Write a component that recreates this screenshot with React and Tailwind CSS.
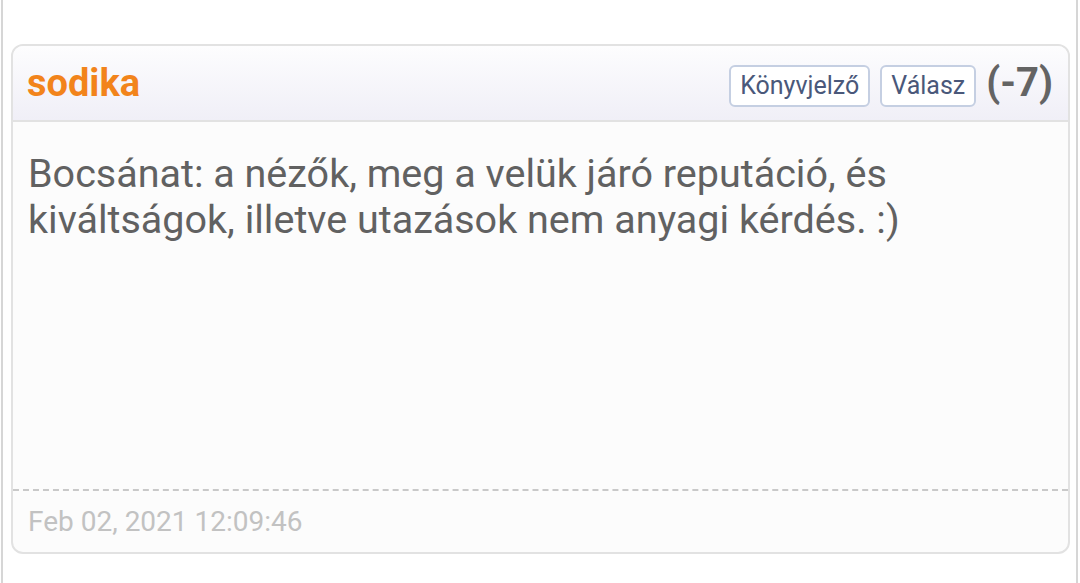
const App = () => {
  return (
    <div className="w-[1080px] h-[583px] bg-white font-['Roboto',sans-serif] overflow-hidden">
      <div className="ml-px w-[1077px] h-full border-x-2 border-[#d6d6d6] pl-2 pt-[44px]">
        <div className="w-[1059px] h-[510px] rounded-xl border-2 border-[#e2e2e2] bg-[#fcfcfc] flex flex-col overflow-hidden">
          <div className="h-[76px] shrink-0 border-b-2 border-[#e2e2e2] bg-gradient-to-b from-[#fdfdfe] to-[#f0eff7] flex items-center justify-between pl-[14px] pr-[15px]">
            <span className="text-[38px] font-bold text-[#f2841b] leading-none">sodika</span>
            <div className="flex items-center gap-[10px]">
              <button className="mt-[5px] h-[42px] px-[9px] rounded-md border-2 border-[#c5cfe2] bg-white text-[25px] text-[#4a587a] leading-none">Könyvjelző</button>
              <button className="mt-[5px] h-[42px] px-[9px] rounded-md border-2 border-[#c5cfe2] bg-white text-[25px] text-[#4a587a] leading-none">Válasz</button>
              <span className="text-[40px] font-bold text-[#646464] leading-none">(-7)</span>
            </div>
          </div>
          <div className="flex-1 pl-[15px] pr-4 pt-[29px]">
            <p className="text-[39.5px] leading-[46px] text-[#616161]">
              Bocsánat: a nézők, meg a velük járó reputáció, és kiváltságok, illetve utazások nem anyagi kérdés. :)
            </p>
          </div>
          <div className="border-t-2 border-dashed border-[#c9c9c9]" />
          <div className="h-[61px] shrink-0 flex items-center pl-[15px] text-[28px] text-[#c2c2c2]">
            Feb 02, 2021 12:09:46
          </div>
        </div>
      </div>
    </div>
  );
};

export default App;
